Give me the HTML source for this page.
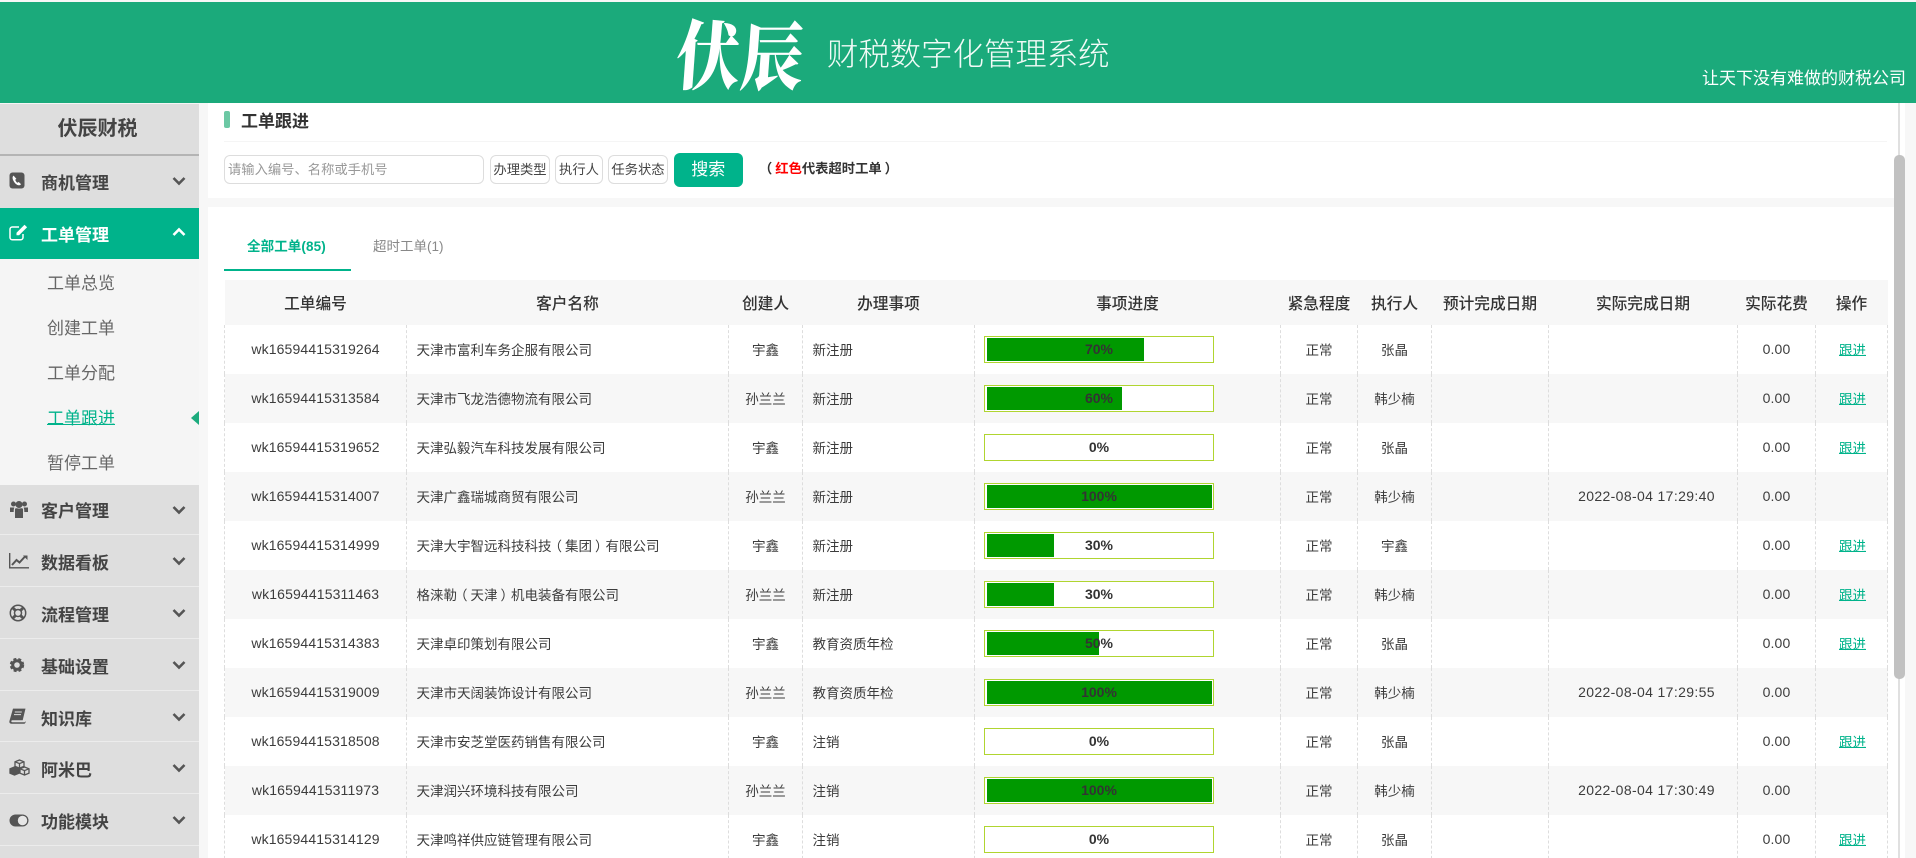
<!DOCTYPE html>
<html lang="zh-CN">
<head>
<meta charset="utf-8">
<title>伏辰财税数字化管理系统</title>
<style>
*{box-sizing:border-box}
html,body{margin:0;padding:0;width:1916px;height:858px;overflow:hidden;background:#f7f7f7}
body{position:relative;font-family:"Liberation Sans","Noto Sans CJK SC",sans-serif;color:#333;font-size:13.5px}
.a{position:absolute;white-space:nowrap}
#top{left:0;top:2px;width:1916px;height:101px;background:#1baa7b}
.logo{font-family:"Noto Serif CJK SC",serif;font-weight:900;color:#fff;font-size:63px;line-height:70px;transform-origin:50% 50%}
#side{left:0;top:103px;width:199px;height:755px;background:#f5f5f5}
.mi{left:0;width:199px;background:#dedede;border-bottom:1px solid #ececec}
.mt{left:41px;font-size:17px;font-weight:700;color:#444;line-height:24px}
.si{left:47px;font-size:17px;color:#666;line-height:24px}
.ic{position:absolute;overflow:visible}
table{position:absolute;left:224px;top:280px;width:1663px;border-collapse:collapse;table-layout:fixed}
th{height:45px;background:#f7f7f7;font-size:15.7px;font-weight:500;color:#333;text-align:center;padding:0}
td{height:49px;padding:0 0 2px;text-align:center;border-left:1px dashed #ddd;font-size:13.5px;color:#3c3c3c;white-space:nowrap}
td:last-child{border-right:1px dashed #ddd}
tr:nth-child(even) td{background:#f7f7f7}
td.l{text-align:left;padding-left:9.500px}
td.n{font-size:14px;letter-spacing:.14px}
td.d{font-size:14px;letter-spacing:.36px;padding-left:7px}
td a{color:#00b38b;text-decoration:underline;text-underline-offset:0;position:relative;left:1px}
.lp{position:relative;left:-3px}
.rp{position:relative;left:3px}
.p{position:relative;top:1px;display:block;margin-left:9px;width:230px;height:27px;border:1px solid #b0d530;background:#fff;line-height:25px;text-align:center;font-size:14px;font-weight:700;color:#333}
.p i{position:absolute;left:2px;top:1px;height:23px;background:#009900}
.p b{position:relative}
.box{background:#fff;border:1px solid #ddd;border-radius:6px;font-size:13.3px;line-height:27px;height:29px;top:155px;text-align:center;color:#444}
</style>
</head>
<body>
<div class="a" id="top"></div>
<div class="a logo" style="left:677px;top:17px;transform:scaleY(1.2) skewX(-5deg)">伏</div>
<div class="a logo" style="left:741px;top:18px;transform:scaleY(1.2) skewX(-5deg)">辰</div>
<div class="a" style="left:827px;top:35px;font-size:31.4px;line-height:40px;color:#f2fbf7;font-weight:300">财税数字化管理系统</div>
<div class="a" style="left:1702px;top:66px;font-size:17px;line-height:26px;color:#fff">让天下没有难做的财税公司</div>

<div class="a" id="side"></div>
<div class="a" style="left:0;top:104px;width:199px;height:52px;background:#dedede;border-bottom:2px solid #b4b4b4"></div>
<div class="a" style="left:0;width:195px;top:115px;text-align:center;font-size:20px;font-weight:700;color:#444;line-height:28px">伏辰财税</div>

<div class="a" style="left:0;top:156px;width:199px;height:52px;background:#dedede"></div>
<svg class="ic" style="left:9px;top:172px" width="16" height="17" viewBox="0 0 16 17"><rect x="0.5" y="0.5" width="15" height="16" rx="3" fill="#555"/><path d="M4.6 3.6c-1.3.9-1.3 2.8-.3 4.9 1 2.2 2.7 4 4.600 4.600 1.400.4 2.600 0 3.100-1l-2.300-2.100-1.300.8c-1-.6-1.800-1.800-2.200-3l1.200-.9z" fill="#fff"/></svg>
<div class="a mt" style="top:172px">商机管理</div>
<svg class="ic" style="left:172px;top:176px" width="14" height="10" viewBox="0 0 14 10"><path d="M1.500 2L7 7.500 12.500 2" fill="none" stroke="#555" stroke-width="2.600"/></svg>

<div class="a" style="left:0;top:208px;width:199px;height:51px;background:#00b38b"></div>
<svg class="ic" style="left:9px;top:224px" width="19" height="17" viewBox="0 0 19 17"><path d="M14 10v3.500a2.300 2.300 0 0 1-2.300 2.300H3.300A2.300 2.300 0 0 1 1 13.500V5.300A2.300 2.300 0 0 1 3.300 3H10" fill="none" stroke="#fff" stroke-width="1.500"/><path d="M15.500 .8l2.600 2.500-8 8H7.500V8.800z" fill="#fff"/></svg>
<div class="a mt" style="top:224px;color:#fff">工单管理</div>
<svg class="ic" style="left:172px;top:227px" width="14" height="10" viewBox="0 0 14 10"><path d="M1.500 8L7 2.500 12.500 8" fill="none" stroke="#fff" stroke-width="2.600"/></svg>

<div class="a si" style="top:272px">工单总览</div>
<div class="a si" style="top:317px">创建工单</div>
<div class="a si" style="top:362px">工单分配</div>
<div class="a si" style="top:407px;color:#00b38b;text-decoration:underline;text-underline-offset:0">工单跟进</div>
<div class="a si" style="top:452px">暂停工单</div>
<svg class="ic" style="left:191px;top:411px" width="8" height="14" viewBox="0 0 8 14"><path d="M8 0v14L0 7z" fill="#1cab7d"/></svg>

<div class="a mi" style="top:485px;height:50px"></div>
<div class="a mi" style="top:535px;height:52px"></div>
<div class="a mi" style="top:587px;height:52px"></div>
<div class="a mi" style="top:639px;height:52px"></div>
<div class="a mi" style="top:691px;height:51px"></div>
<div class="a mi" style="top:742px;height:52px"></div>
<div class="a mi" style="top:794px;height:52px"></div>
<div class="a mi" style="top:846px;height:12px;border:0"></div>

<div class="a mt" style="top:500px">客户管理</div>
<div class="a mt" style="top:552px">数据看板</div>
<div class="a mt" style="top:604px">流程管理</div>
<div class="a mt" style="top:656px">基础设置</div>
<div class="a mt" style="top:708px">知识库</div>
<div class="a mt" style="top:759px">阿米巴</div>
<div class="a mt" style="top:811px">功能模块</div>

<svg class="ic" style="left:172px;top:505px" width="14" height="10" viewBox="0 0 14 10"><path d="M1.500 2L7 7.500 12.500 2" fill="none" stroke="#555" stroke-width="2.600"/></svg>
<svg class="ic" style="left:172px;top:556px" width="14" height="10" viewBox="0 0 14 10"><path d="M1.500 2L7 7.500 12.500 2" fill="none" stroke="#555" stroke-width="2.600"/></svg>
<svg class="ic" style="left:172px;top:608px" width="14" height="10" viewBox="0 0 14 10"><path d="M1.500 2L7 7.500 12.500 2" fill="none" stroke="#555" stroke-width="2.600"/></svg>
<svg class="ic" style="left:172px;top:660px" width="14" height="10" viewBox="0 0 14 10"><path d="M1.500 2L7 7.500 12.500 2" fill="none" stroke="#555" stroke-width="2.600"/></svg>
<svg class="ic" style="left:172px;top:712px" width="14" height="10" viewBox="0 0 14 10"><path d="M1.500 2L7 7.500 12.500 2" fill="none" stroke="#555" stroke-width="2.600"/></svg>
<svg class="ic" style="left:172px;top:763px" width="14" height="10" viewBox="0 0 14 10"><path d="M1.500 2L7 7.500 12.500 2" fill="none" stroke="#555" stroke-width="2.600"/></svg>
<svg class="ic" style="left:172px;top:815px" width="14" height="10" viewBox="0 0 14 10"><path d="M1.500 2L7 7.500 12.500 2" fill="none" stroke="#555" stroke-width="2.600"/></svg>

<svg class="ic" style="left:10px;top:500px" width="18" height="18" viewBox="0 0 18 18"><g fill="#555"><circle cx="3.500" cy="4" r="2.500"/><circle cx="14.500" cy="4" r="2.500"/><circle cx="9" cy="4.500" r="3.500"/><path d="M0 7.500h4.300c-.3 1-.6 2-.6 3.200V12H0zM18 7.500h-4.300c.3 1 .6 2 .6 3.200V12H18zM5 9.200C5 8.300 6 8 7 8.300c1.300.4 2.700.4 4 0 1-.3 2 0 2 .9V18H5z"/></g></svg>
<svg class="ic" style="left:9px;top:553px" width="20" height="16" viewBox="0 0 20 16"><path d="M.7 0v14.800H20" fill="none" stroke="#555" stroke-width="1.400"/><path d="M3 12l4.500-5 3 2.500 5.500-6" fill="none" stroke="#555" stroke-width="2"/><path d="M14 2.500h4.500V7z" fill="#555"/></svg>
<svg class="ic" style="left:9px;top:604px" width="18" height="18" viewBox="0 0 18 18"><circle cx="9" cy="9" r="7.700" fill="none" stroke="#555" stroke-width="1.500"/><circle cx="9" cy="9" r="3.500" fill="none" stroke="#555" stroke-width="1.500"/><path d="M3.500 3.500l3 3M14.500 3.500l-3 3M3.500 14.500l3-3M14.500 14.500l-3-3" stroke="#555" stroke-width="3"/></svg>
<svg class="ic" style="left:10px;top:658px" width="14" height="14" viewBox="0 0 14 14"><circle cx="7" cy="7" r="4.300" fill="none" stroke="#555" stroke-width="3"/><circle cx="7" cy="7" r="6" fill="none" stroke="#555" stroke-width="2.400" stroke-dasharray="2.900 2.000"/></svg>
<svg class="ic" style="left:9px;top:708px" width="17" height="16" viewBox="0 0 17 16"><path d="M4 .6h12.500l-2.800 11.600H3.200c-1.200 0-1.200 2 .2 2h12.400l.7-1.200v1.700l-1 1H2.500C.8 15.700 0 14.600.5 12.800z" fill="#555"/><path d="M5.800 4h7M5 6.600h7" stroke="#dedede" stroke-width="1"/></svg>
<svg class="ic" style="left:9px;top:759px" width="21" height="17" viewBox="0 0 21 17"><g fill="none" stroke="#555" stroke-width="1.300"><path d="M10.500 1l4.500 1.800v4.500l-4.500 1.800L6 7.300V2.800z"/><path d="M6 2.800l4.500 1.800L15 2.800M10.500 4.600v4.500"/><path d="M5.500 8L10 9.800v4.400L5.500 16 1 14.200V9.800z" fill="#555"/><path d="M15.500 8l4.500 1.800v4.400L15.500 16 11 14.200V9.800z"/><path d="M11 9.800l4.500 1.800 4.500-1.800M15.500 11.600V16"/></g></svg>
<svg class="ic" style="left:9px;top:814px" width="20" height="13" viewBox="0 0 20 13"><rect x="0.500" y="0.500" width="19" height="12" rx="6" fill="#555"/><circle cx="13.500" cy="6.500" r="4.700" fill="#e6e6e6"/></svg>

<div class="a" style="left:208px;top:103px;width:1697px;height:95px;background:#fff"></div>
<div class="a" style="left:208px;top:207px;width:1697px;height:651px;background:#fff"></div>

<div class="a" style="left:224px;top:111px;width:6px;height:17px;border-radius:2px;background:#6cc8a4"></div>
<div class="a" style="left:241px;top:109px;font-size:17px;font-weight:700;line-height:26px;color:#333">工单跟进</div>
<div class="a" style="left:224px;top:141px;width:1663px;height:1px;background:#f5f5f5"></div>

<div class="a box" style="left:224px;width:260px;text-align:left;padding-left:3px;color:#999">请输入编号、名称或手机号</div>
<div class="a box" style="left:490px;width:60px">办理类型</div>
<div class="a box" style="left:555px;width:48px">执行人</div>
<div class="a box" style="left:608px;width:60px">任务状态</div>
<div class="a" style="left:673.500px;top:153px;width:69.500px;height:34px;border-radius:6px;background:#00b38b;color:#fff;font-size:17px;line-height:34px;text-align:center">搜索</div>
<div class="a" style="left:762px;top:159px;font-size:13.300px;line-height:20px;color:#333;font-weight:700"><span class="lp">（</span><span style="color:#f00">红色</span>代表超时工单<span class="rp">）</span></div>

<div class="a" style="left:247px;top:237px;font-size:13.500px;line-height:20px;font-weight:700;color:#00b38b;letter-spacing:.1px">全部工单(85)</div>
<div class="a" style="left:373px;top:237px;font-size:13.500px;line-height:20px;color:#888">超时工单(1)</div>
<div class="a" style="left:224px;top:269px;width:127px;height:2px;background:#00b38b"></div>

<table>
<colgroup><col style="width:182px"><col style="width:322px"><col style="width:74px"><col style="width:172px"><col style="width:306px"><col style="width:77px"><col style="width:74px"><col style="width:117px"><col style="width:189px"><col style="width:78px"><col style="width:72px"></colgroup>
<thead><tr><th>工单编号</th><th>客户名称</th><th>创建人</th><th>办理事项</th><th>事项进度</th><th>紧急程度</th><th>执行人</th><th>预计完成日期</th><th>实际完成日期</th><th>实际花费</th><th>操作</th></tr></thead>
<tbody>
<tr><td class="n">wk16594415319264</td><td class="l">天津市富利车务企服有限公司</td><td>宇鑫</td><td class="l">新注册</td><td><span class="p"><i style="width:157px"></i><b>70%</b></span></td><td>正常</td><td>张晶</td><td></td><td></td><td class="n">0.00</td><td><a>跟进</a></td></tr>
<tr><td class="n">wk16594415313584</td><td class="l">天津市飞龙浩德物流有限公司</td><td>孙兰兰</td><td class="l">新注册</td><td><span class="p"><i style="width:135px"></i><b>60%</b></span></td><td>正常</td><td>韩少楠</td><td></td><td></td><td class="n">0.00</td><td><a>跟进</a></td></tr>
<tr><td class="n">wk16594415319652</td><td class="l">天津弘毅汽车科技发展有限公司</td><td>宇鑫</td><td class="l">新注册</td><td><span class="p"><b>0%</b></span></td><td>正常</td><td>张晶</td><td></td><td></td><td class="n">0.00</td><td><a>跟进</a></td></tr>
<tr><td class="n">wk16594415314007</td><td class="l">天津广鑫瑞城商贸有限公司</td><td>孙兰兰</td><td class="l">新注册</td><td><span class="p"><i style="width:225px"></i><b>100%</b></span></td><td>正常</td><td>韩少楠</td><td></td><td class="d">2022-08-04 17:29:40</td><td class="n">0.00</td><td></td></tr>
<tr><td class="n">wk16594415314999</td><td class="l">天津大宇智远科技科技<span class="lp">（</span>集团<span class="rp">）</span>有限公司</td><td>宇鑫</td><td class="l">新注册</td><td><span class="p"><i style="width:67px"></i><b>30%</b></span></td><td>正常</td><td>宇鑫</td><td></td><td></td><td class="n">0.00</td><td><a>跟进</a></td></tr>
<tr><td class="n">wk16594415311463</td><td class="l">格涞勒<span class="lp">（</span>天津<span class="rp">）</span>机电装备有限公司</td><td>孙兰兰</td><td class="l">新注册</td><td><span class="p"><i style="width:67px"></i><b>30%</b></span></td><td>正常</td><td>韩少楠</td><td></td><td></td><td class="n">0.00</td><td><a>跟进</a></td></tr>
<tr><td class="n">wk16594415314383</td><td class="l">天津卓印策划有限公司</td><td>宇鑫</td><td class="l">教育资质年检</td><td><span class="p"><i style="width:112px"></i><b>50%</b></span></td><td>正常</td><td>张晶</td><td></td><td></td><td class="n">0.00</td><td><a>跟进</a></td></tr>
<tr><td class="n">wk16594415319009</td><td class="l">天津市天阔装饰设计有限公司</td><td>孙兰兰</td><td class="l">教育资质年检</td><td><span class="p"><i style="width:225px"></i><b>100%</b></span></td><td>正常</td><td>韩少楠</td><td></td><td class="d">2022-08-04 17:29:55</td><td class="n">0.00</td><td></td></tr>
<tr><td class="n">wk16594415318508</td><td class="l">天津市安芝堂医药销售有限公司</td><td>宇鑫</td><td class="l">注销</td><td><span class="p"><b>0%</b></span></td><td>正常</td><td>张晶</td><td></td><td></td><td class="n">0.00</td><td><a>跟进</a></td></tr>
<tr><td class="n">wk16594415311973</td><td class="l">天津润兴环境科技有限公司</td><td>孙兰兰</td><td class="l">注销</td><td><span class="p"><i style="width:225px"></i><b>100%</b></span></td><td>正常</td><td>韩少楠</td><td></td><td class="d">2022-08-04 17:30:49</td><td class="n">0.00</td><td></td></tr>
<tr><td class="n">wk16594415314129</td><td class="l">天津鸣祥供应链管理有限公司</td><td>宇鑫</td><td class="l">注销</td><td><span class="p"><b>0%</b></span></td><td>正常</td><td>张晶</td><td></td><td></td><td class="n">0.00</td><td><a>跟进</a></td></tr>
</tbody>
</table>

<div class="a" style="left:1898px;top:103px;width:2px;height:755px;background:#e0e0e0"></div>
<div class="a" style="left:1894px;top:155px;width:11px;height:524px;border-radius:5px;background:#c1c1c1"></div>
</body>
</html>
